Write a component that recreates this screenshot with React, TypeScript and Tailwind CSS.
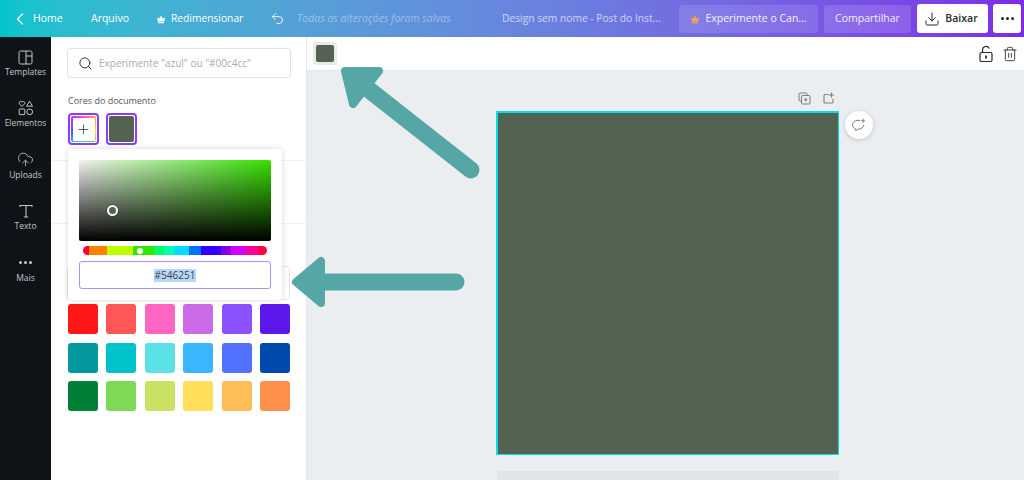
import React from 'react';
import { Undo2, Search, Plus, Download, Trash2, CloudUpload } from 'lucide-react';

const colors = [
  '#ff1616', '#ff5757', '#ff66c4', '#cb6ce6', '#8c52ff', '#5e17eb',
  '#03989e', '#00c2cb', '#5ce1e6', '#38b6ff', '#5271ff', '#004aad',
  '#008037', '#7ed957', '#c9e265', '#ffde59', '#ffbd59', '#ff914d',
];

const Crown = ({ color }: { color: string }) => (
  <svg width="10" height="10" viewBox="0 0 10 10" fill={color}>
    <path d="M1 3.2l2 1.6L5 1.8l2 3 2-1.6L8.2 7.4H1.8z" />
    <rect x="2" y="8" width="6" height="1.2" rx="0.5" />
  </svg>
);

const SideItem = ({ label, children }: { label: string; children: React.ReactNode }) => (
  <div className="h-[51.4px] flex flex-col items-center">
    <div className="h-[20px] flex items-center justify-center">{children}</div>
    <span className="text-[8.5px] leading-[12px] -mt-[1px] text-[#c3c6c9]">{label}</span>
  </div>
);

export default function App() {
  return (
    <div className="relative w-[1024px] h-[480px] overflow-hidden flex flex-col bg-white text-[#0e1318] font-['Open_Sans','Noto_Sans',sans-serif]">
      <header className="h-[37px] shrink-0 flex items-center bg-linear-to-r from-[#03c4cc] to-[#7d2ae8] text-white text-[10.5px] font-medium whitespace-nowrap">
        <svg className="ml-[16px]" width="8" height="12" viewBox="0 0 8 12" fill="none" stroke="#ffffff" strokeWidth="1.3" strokeLinecap="round" strokeLinejoin="round">
          <path d="M6.5 1L1.5 6l5 5" />
        </svg>
        <span className="ml-[9px] w-[30px]">Home</span>
        <span className="ml-[28px] w-[38px]">Arquivo</span>
        <span className="ml-[27px]"><Crown color="#ffffff" /></span>
        <span className="ml-[5px] w-[74px] text-[10.25px]">Redimensionar</span>
        <Undo2 className="ml-[25px] w-[15px] h-[15px] text-white" strokeWidth={1.4} />
        <span className="ml-[12px] w-[156px] italic font-normal text-[10.5px] text-white/40">Todas as alterações foram salvas</span>
        <span className="ml-[49px] w-[165px] text-[10.25px] text-white/65">Design sem nome - Post do Inst...</span>
        <div className="ml-[12px] w-[139px] h-[28px] rounded-[3px] bg-white/12 flex items-center justify-center gap-[5px] text-white/90">
          <Crown color="#f5a742" />
          <span>Experimente o Can...</span>
        </div>
        <div className="ml-[6px] w-[87px] h-[28px] rounded-[3px] bg-white/14 flex items-center justify-center text-white/90">Compartilhar</div>
        <div className="ml-[6px] w-[71px] h-[29px] rounded-[3px] bg-white text-[#26292c] font-semibold flex items-center justify-center gap-[5px] pr-[3px]">
          <Download className="w-[16px] h-[16px]" strokeWidth={1.5} />
          <span>Baixar</span>
        </div>
        <div className="ml-[5px] w-[28px] h-[29px] rounded-[3px] bg-white flex items-center justify-center gap-[2px]">
          <span className="w-[3px] h-[3px] rounded-full bg-[#26292c]" />
          <span className="w-[3px] h-[3px] rounded-full bg-[#26292c]" />
          <span className="w-[3px] h-[3px] rounded-full bg-[#26292c]" />
        </div>
      </header>

      <div className="flex flex-1 min-h-0">
        <nav className="w-[51px] shrink-0 bg-[#0e1318] pt-[10px] flex flex-col">
          <SideItem label="Templates">
            <svg width="15" height="15" viewBox="0 0 15 15" fill="none" stroke="#c3c6c9" strokeWidth="1">
              <rect x="1" y="1" width="13" height="13" rx="1.5" />
              <path d="M8 1v13M8 6h6" />
            </svg>
          </SideItem>
          <SideItem label="Elementos">
            <svg width="16" height="16" viewBox="0 0 16 16" fill="none" stroke="#c3c6c9" strokeWidth="1">
              <path d="M4 6.5L1.4 3.8a1.5 1.5 0 0 1 2.2-2L4 2.2l.4-.4a1.5 1.5 0 0 1 2.2 2z" />
              <path d="M11.5 1.2l3 5h-6z" />
              <rect x="1.2" y="9" width="5.6" height="5.6" rx="0.6" />
              <circle cx="11.7" cy="11.8" r="2.9" />
            </svg>
          </SideItem>
          <SideItem label="Uploads">
            <CloudUpload className="w-[17px] h-[17px] text-[#c3c6c9]" strokeWidth={1.2} />
          </SideItem>
          <SideItem label="Texto">
            <svg width="16" height="16" viewBox="0 0 16 16" fill="none" stroke="#c3c6c9" strokeWidth="1.1">
              <path d="M2 4V2.5h12V4M8 2.5V14M5.8 14h4.4" />
            </svg>
          </SideItem>
          <SideItem label="Mais">
            <div className="flex gap-[2px]">
              <span className="w-[3px] h-[3px] rounded-full bg-[#c3c6c9]" />
              <span className="w-[3px] h-[3px] rounded-full bg-[#c3c6c9]" />
              <span className="w-[3px] h-[3px] rounded-full bg-[#c3c6c9]" />
            </div>
          </SideItem>
        </nav>

        <aside className="relative w-[256px] shrink-0 border-r border-[#e4e7ea] pt-[11px] pl-[16px] pr-[16px]">
          <div className="w-[224px] h-[30px] border border-[#dfe2e6] rounded-[3px] flex items-center pl-[10px] gap-[6px]">
            <Search className="w-[15px] h-[15px] text-[#26292c]" strokeWidth={1.5} />
            <span className="text-[10px] text-[#a9acb0]">Experimente "azul" ou "#00c4cc"</span>
          </div>
          <p className="mt-[16px] ml-[1px] text-[9px] leading-[14px] font-medium text-[#55585c]">Cores do documento</p>
          <div className="mt-[5px] ml-[1px] flex gap-[7px]">
            <div className="w-[31px] h-[32px] rounded-[4px] border-2 border-[#8b3dff] p-[1px]">
              <div className="w-full h-full rounded-[2px] p-[1.5px] bg-[conic-gradient(#ff4fd8,#ffa52e,#f5e63c,#3ee05c,#29d4dc,#3b5cff,#b13bff,#ff4fd8)]">
                <div className="w-full h-full bg-white flex items-center justify-center">
                  <Plus className="w-[15px] h-[15px] text-[#26292c]" strokeWidth={1.2} />
                </div>
              </div>
            </div>
            <div className="w-[31px] h-[32px] rounded-[4px] border-2 border-[#8b3dff] p-[1px]">
              <div className="w-full h-full rounded-[2px] bg-[#546251]" />
            </div>
          </div>
          <div className="mt-[15px] -mx-[16px] h-px bg-[#f1f2f4]" />
          <div className="mt-[62px] -mx-[16px] h-px bg-[#f1f2f4]" />
          <div className="mt-[42px] w-[223px] h-[34px] border border-[#e4e7ea] rounded-[3px]" />
          <div className="mt-[4px] ml-[1px] grid grid-cols-[repeat(6,30px)] gap-x-[8.4px] gap-y-[8.5px]">
            {colors.map((c) => (
              <div key={c} className="h-[30px] rounded-[3px]" style={{ backgroundColor: c }} />
            ))}
          </div>

          <div className="absolute left-[17px] top-[112px] w-[214px] h-[151px] bg-white rounded-[3px] shadow-[0_0_6px_rgba(14,19,24,0.16)] p-[11px] flex flex-col">
            <div className="relative h-[81px] rounded-[2px] bg-[linear-gradient(to_top,#000,transparent),linear-gradient(to_right,#f2f2f2,#36e000)]">
              <span className="absolute left-[28px] top-[45px] w-[11px] h-[11px] rounded-full border-2 border-white bg-[#546251] ring-1 ring-black/20" />
            </div>
            <div className="relative mt-[5px] mx-[4px] h-[9px] rounded-full bg-[linear-gradient(to_right,#ff0033_3.3%,#ff8000_3.3%,#ff8000_13.3%,#bfff00_13.3%,#bfff00_27.4%,#33e600_27.4%,#33e600_38.7%,#00ff66_38.7%,#00ff66_43.8%,#00ffb3_43.8%,#00ffb3_49.3%,#00ddff_49.3%,#00ddff_57.5%,#0070ff_57.5%,#0070ff_63.9%,#3300ff_63.9%,#3300ff_74.8%,#8000e6_74.8%,#8000e6_80.3%,#d400ff_80.3%,#d400ff_88.5%,#ff0099_88.5%,#ff0099_94.9%,#ff0040_94.9%)]">
              <span className="absolute left-[54px] top-[1.5px] w-[6px] h-[6px] rounded-full bg-white" />
            </div>
            <div className="mt-[6px] h-[28px] border border-[#b78df5] rounded-[3px] flex items-center justify-center">
              <span className="text-[10px] leading-[13px] px-px bg-[#b8d7fb] text-[#3b3f44]">#546251</span>
            </div>
          </div>
        </aside>

        <main className="flex-1 min-w-0 flex flex-col bg-[#ebeef1]">
          <div className="h-[34px] shrink-0 bg-white border-b border-[#e4e7ea] flex items-center pl-[6px] pr-[6px]">
            <div className="w-[24px] h-[23px] rounded-[3px] bg-[#e9eaeb] p-[3px]">
              <div className="w-full h-full rounded-[2px] bg-[#546251]" />
            </div>
            <svg className="ml-auto" width="16" height="18" viewBox="0 0 16 18" fill="none" stroke="#26292c" strokeWidth="1.2">
              <rect x="2" y="7.5" width="12" height="9" rx="1.5" />
              <path d="M4.5 7.5V4.8a3.5 3.5 0 0 1 6.7-1.3" />
              <path d="M8 10.5v3" strokeWidth="1.8" />
            </svg>
            <Trash2 className="ml-[8px] w-[16px] h-[16px] text-[#26292c]" strokeWidth={1.3} />
          </div>
          <div className="pl-[189px] pt-[18px]">
            <div className="w-[343px] h-[18px] flex justify-end items-center gap-[12px] pr-[4px]">
              <svg width="13" height="13" viewBox="0 0 13 13" fill="none" stroke="#7a7e83" strokeWidth="1">
                <path d="M9 3V2a1 1 0 0 0-1-1H2a1 1 0 0 0-1 1v6a1 1 0 0 0 1 1h1" />
                <rect x="3.5" y="3.5" width="8.5" height="8.5" rx="1" />
                <path d="M7.75 6v3.5M6 7.75h3.5" />
              </svg>
              <svg width="12" height="12" viewBox="0 0 12 12" fill="none" stroke="#7a7e83" strokeWidth="1.1">
                <path d="M5.5 2.5H2a1 1 0 0 0-1 1V10a1 1 0 0 0 1 1h7a1 1 0 0 0 1-1V7M8.5 0.5v5M6 3h5" />
              </svg>
            </div>
            <div className="flex items-start gap-[6px] mt-[4px]">
              <div className="w-[343px] h-[344px] bg-[#00e0e6] p-[1.5px]">
                <div className="w-full h-full bg-[#546251]" />
              </div>
              <div className="w-[28px] h-[28px] rounded-full bg-white shadow-[0_1px_4px_rgba(14,19,24,0.18)] flex items-center justify-center">
                <svg width="16" height="15" viewBox="0 0 16 15" fill="none" stroke="#7a7e83" strokeWidth="1">
                  <path d="M9 2.6a6 6 0 0 0-2-.3C3.8 2.3 1.5 4.2 1.5 6.8c0 1.9 1.2 3.3 3 4l.4 2 2-1.6c3 .1 5.6-1.6 6-4.4" />
                  <path d="M12 0.8v4M10 2.8h4" />
                </svg>
              </div>
            </div>
            <div className="mt-[16px] ml-px w-[342px] h-[20px] rounded-[2px] bg-[#e1e4e8]" />
          </div>
        </main>
      </div>

      {/* setas de anotacao por cima da tela */}
      <svg className="absolute left-0 top-0 pointer-events-none" width="1024" height="480" viewBox="0 0 1024 480">
        <g fill="#56a6a5" stroke="#56a6a5" strokeLinecap="round" strokeLinejoin="round">
          <path d="M471 170L368 89" strokeWidth="17" fill="none" />
          <path d="M345 71L379 71L353 104Z" strokeWidth="8" />
          <path d="M456 282H320" strokeWidth="17" fill="none" />
          <path d="M296 282L321 261V303Z" strokeWidth="8" />
        </g>
      </svg>
    </div>
  );
}
